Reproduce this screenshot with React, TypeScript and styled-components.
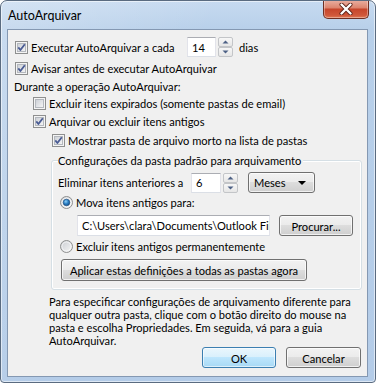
import React from 'react';
import styled, { createGlobalStyle } from 'styled-components';

const GlobalStyle = createGlobalStyle`
  html, body { margin: 0; padding: 0; background: #ffffff; }
  body {
    font-family: Lato, "Noto Sans", sans-serif;
    font-size: 11.1px;
    color: #000;
  }
  * { box-sizing: border-box; }
`;

const btnGradient = 'linear-gradient(180deg, #f2f2f2 0%, #ebebeb 49%, #dddddd 50%, #cfcfcf 100%)';

const Window = styled.div`
  width: 376px;
  height: 383px;
  border: 1px solid #5a6b80;
  border-radius: 7px 7px 4px 4px;
  background:
    linear-gradient(115deg, rgba(255, 255, 255, 0.25) 0%, rgba(255, 255, 255, 0) 40%),
    linear-gradient(180deg, #c6daf0 0%, #b8d0ea 28px, #b4cce8 100%);
  box-shadow: inset 0 0 0 1px rgba(255, 255, 255, 0.55);
  display: flex;
  flex-direction: column;
  overflow: hidden;
`;

const TitleBar = styled.div`
  height: 28px;
  display: flex;
  align-items: flex-start;
  padding-left: 7px;
`;

const Title = styled.div`
  line-height: 29px;
  font-size: 12.5px;
  color: #000;
`;

const CloseButton = styled.div`
  margin-left: auto;
  margin-right: 6px;
  margin-top: -1px;
  width: 46px;
  height: 19px;
  border: 1px solid #6e2f23;
  border-top: none;
  border-radius: 0 0 5px 5px;
  background: linear-gradient(180deg, #eab1a3 0%, #dd8670 42%, #c7462c 52%, #d0583b 85%, #e07a55 100%);
  box-shadow: inset 0 0 0 1px rgba(255, 255, 255, 0.35);
  display: flex;
  align-items: center;
  justify-content: center;
`;

const Client = styled.div`
  margin: 0 7px 5px 6px;
  height: 348px;
  border: 1px solid #8498b2;
  background: #f0f0f0;
  padding: 6px 5px 0 7px;
  display: flex;
  flex-direction: column;
`;

const Row = styled.div<{ $h: number; $mt?: number; $ml?: number }>`
  display: flex;
  align-items: center;
  height: ${p => p.$h}px;
  margin-top: ${p => p.$mt ?? 0}px;
  margin-left: ${p => p.$ml ?? 0}px;
  white-space: nowrap;
`;

const Option = styled.label<{ $w?: number }>`
  display: flex;
  align-items: center;
  gap: 3px;
  width: ${p => (p.$w ? `${p.$w}px` : 'auto')};
  flex: none;
`;

const Text = styled.span<{ $w?: number; $ml?: number }>`
  display: inline-block;
  width: ${p => (p.$w ? `${p.$w}px` : 'auto')};
  margin-left: ${p => p.$ml ?? 0}px;
  flex: none;
`;

const TextBox = styled.div<{ $w: number; $h: number }>`
  width: ${p => p.$w}px;
  height: ${p => p.$h}px;
  background: #fff;
  border: 1px solid #dbdfe6;
  border-top-color: #abadb3;
  border-left-color: #e2e3ea;
  border-right-color: #e2e3ea;
  padding-left: 4px;
  display: flex;
  align-items: center;
  overflow: hidden;
  flex: none;
`;

const Spinner = styled.div`
  width: 15px;
  height: 20px;
  margin-left: 2px;
  display: flex;
  flex-direction: column;
  flex: none;
`;

const SpinHalf = styled.div`
  flex: 1;
  border: 1px solid #c3c5c8;
  border-radius: 2px;
  background: linear-gradient(180deg, #f7f7f7 0%, #e6e6e6 100%);
  display: flex;
  align-items: center;
  justify-content: center;
`;

const Button = styled.div<{ $w: number; $h?: number; $default?: boolean; $ml?: number }>`
  width: ${p => p.$w}px;
  height: ${p => p.$h ?? 21}px;
  margin-left: ${p => p.$ml ?? 0}px;
  border: 1px solid ${p => (p.$default ? '#3c7fb1' : '#707070')};
  border-radius: 3px;
  background: ${p =>
    p.$default
      ? 'linear-gradient(180deg, #eaf6fd 0%, #d9f0fc 49%, #bee6fd 50%, #a7d9f5 100%)'
      : btnGradient};
  box-shadow: inset 0 0 0 1px ${p => (p.$default ? 'rgba(255,255,255,0.6)' : 'rgba(255,255,255,0.7)')};
  display: flex;
  align-items: center;
  justify-content: center;
  padding-top: 1px;
  flex: none;
`;

const Select = styled.div`
  width: 67px;
  height: 21px;
  margin-left: 10px;
  border: 1px solid #707070;
  border-radius: 3px;
  background: ${btnGradient};
  box-shadow: inset 0 0 0 1px rgba(255, 255, 255, 0.7);
  display: flex;
  align-items: center;
  justify-content: space-between;
  padding: 0 8px 0 5px;
  flex: none;
`;

const Group = styled.div`
  margin: 10px 0 0 36px;
  width: 311px;
  height: 130px;
  border: 1px solid #d5dfe5;
  border-radius: 3px;
  box-shadow: inset 0 0 0 1px #ffffff;
  padding-left: 6px;
  display: flex;
  flex-direction: column;
`;

const Legend = styled.div`
  align-self: flex-start;
  margin-top: -8px;
  height: 16px;
  line-height: 16px;
  padding: 0 2px 0 0;
  background: #f0f0f0;
`;

const Paragraph = styled.p`
  margin: 5px 0 0 34px;
  line-height: 13px;
  white-space: nowrap;
`;

const Footer = styled.div`
  display: flex;
  justify-content: flex-end;
  gap: 10px;
  padding-right: 1px;
`;

const CheckBox = ({ checked }: { checked?: boolean }) => (
  <svg width="13" height="13" viewBox="0 0 13 13" style={{ flex: 'none' }}>
    <defs>
      <linearGradient id="cbg" x1="0" y1="0" x2="1" y2="1">
        <stop offset="0" stopColor="#cbcfd5" />
        <stop offset="1" stopColor="#f6f6f6" />
      </linearGradient>
    </defs>
    <rect x="0.5" y="0.5" width="12" height="12" fill="#f4f4f4" stroke="#8e8f8f" />
    <rect x="2.5" y="2.5" width="8" height="8" fill="url(#cbg)" stroke="#b4b8be" />
    {checked && (
      <path d="M3.3 6.4 L5.4 9 L9.8 3.2" fill="none" stroke="#4a5c94" strokeWidth="1.8" strokeLinejoin="round" />
    )}
  </svg>
);

const Radio = ({ checked }: { checked?: boolean }) => (
  <svg width="13" height="13" viewBox="0 0 13 13" style={{ flex: 'none' }}>
    <defs>
      <linearGradient id="rbg" x1="0" y1="0" x2="1" y2="1">
        <stop offset="0" stopColor="#c9ccd1" />
        <stop offset="1" stopColor="#f7f7f7" />
      </linearGradient>
      <radialGradient id="rdot" cx="0.4" cy="0.35" r="0.7">
        <stop offset="0" stopColor="#8fd0f7" />
        <stop offset="0.5" stopColor="#2b7fc4" />
        <stop offset="1" stopColor="#134d87" />
      </radialGradient>
    </defs>
    <circle cx="6.5" cy="6.5" r="6" fill="url(#rbg)" stroke="#8e8f8f" />
    <circle cx="6.5" cy="6.5" r="4.5" fill="none" stroke="#ffffff" strokeOpacity="0.6" />
    {checked && <circle cx="6.5" cy="6.5" r="3.3" fill="url(#rdot)" stroke="#1b4a7c" strokeWidth="0.6" />}
  </svg>
);

const Arrow = ({ up }: { up?: boolean }) => (
  <svg width="7" height="4" viewBox="0 0 7 4">
    <path d={up ? 'M0.5 3.5 L3.5 0.5 L6.5 3.5 Z' : 'M0.5 0.5 L3.5 3.5 L6.5 0.5 Z'} fill="#4d6185" />
  </svg>
);

const Spin = () => (
  <Spinner>
    <SpinHalf>
      <Arrow up />
    </SpinHalf>
    <SpinHalf>
      <Arrow />
    </SpinHalf>
  </Spinner>
);

const App = () => (
  <>
    <GlobalStyle />
    <Window>
      <TitleBar>
        <Title>AutoArquivar</Title>
        <CloseButton>
          <svg width="14" height="12" viewBox="0 0 14 12">
            <path d="M2.5 1.5 L11.5 10.5 M11.5 1.5 L2.5 10.5" stroke="#5a2016" strokeWidth="4" strokeLinecap="round" />
            <path d="M2.5 1.5 L11.5 10.5 M11.5 1.5 L2.5 10.5" stroke="#ffffff" strokeWidth="2.4" strokeLinecap="round" />
          </svg>
        </CloseButton>
      </TitleBar>
      <Client>
        <Row $h={22}>
          <Option $w={172}>
            <CheckBox checked />
            <span>Executar AutoArquivar a cada</span>
          </Option>
          <TextBox $w={29} $h={20}>14</TextBox>
          <Spin />
          <Text $ml={6}>dias</Text>
        </Row>
        <Row $h={20}>
          <Option>
            <CheckBox checked />
            <span>Avisar antes de executar AutoArquivar</span>
          </Option>
        </Row>
        <Row $h={16} $ml={-1}>
          <Text>Durante a operação AutoArquivar:</Text>
        </Row>
        <Row $h={18} $ml={18}>
          <Option>
            <CheckBox />
            <span>Excluir itens expirados (somente pastas de email)</span>
          </Option>
        </Row>
        <Row $h={19} $ml={18}>
          <Option>
            <CheckBox checked />
            <span>Arquivar ou excluir itens antigos</span>
          </Option>
        </Row>
        <Row $h={19} $ml={37}>
          <Option>
            <CheckBox checked />
            <span>Mostrar pasta de arquivo morto na lista de pastas</span>
          </Option>
        </Row>
        <Group>
          <Legend>Configurações da pasta padrão para arquivamento</Legend>
          <Row $h={21} $mt={3}>
            <Text $w={133}>Eliminar itens anteriores a</Text>
            <TextBox $w={30} $h={20}>6</TextBox>
            <Spin />
            <Select>
              <span>Meses</span>
              <svg width="8" height="4" viewBox="0 0 8 4">
                <path d="M0 0 L8 0 L4 4 Z" fill="#000" />
              </svg>
            </Select>
          </Row>
          <Row $h={18} $ml={2}>
            <Option>
              <Radio checked />
              <span>Mova itens antigos para:</span>
            </Option>
          </Row>
          <Row $h={21} $mt={4} $ml={19}>
            <TextBox $w={193} $h={21}>C:\Users\clara\Documents\Outlook Fil</TextBox>
            <Button $w={74} $ml={9}>Procurar...</Button>
          </Row>
          <Row $h={20} $ml={2}>
            <Option>
              <Radio />
              <span>Excluir itens antigos permanentemente</span>
            </Option>
          </Row>
          <Row $h={22} $mt={3} $ml={3}>
            <Button $w={246} $h={22}>Aplicar estas definições a todas as pastas agora</Button>
          </Row>
        </Group>
        <Paragraph>
          Para especificar configurações de arquivamento diferente para
          <br />
          qualquer outra pasta, clique com o botão direito do mouse na
          <br />
          pasta e escolha Propriedades. Em seguida, vá para a guia
          <br />
          AutoArquivar.
        </Paragraph>
        <Footer>
          <Button $w={74} $default>
            OK
          </Button>
          <Button $w={75}>Cancelar</Button>
        </Footer>
      </Client>
    </Window>
  </>
);

export default App;
